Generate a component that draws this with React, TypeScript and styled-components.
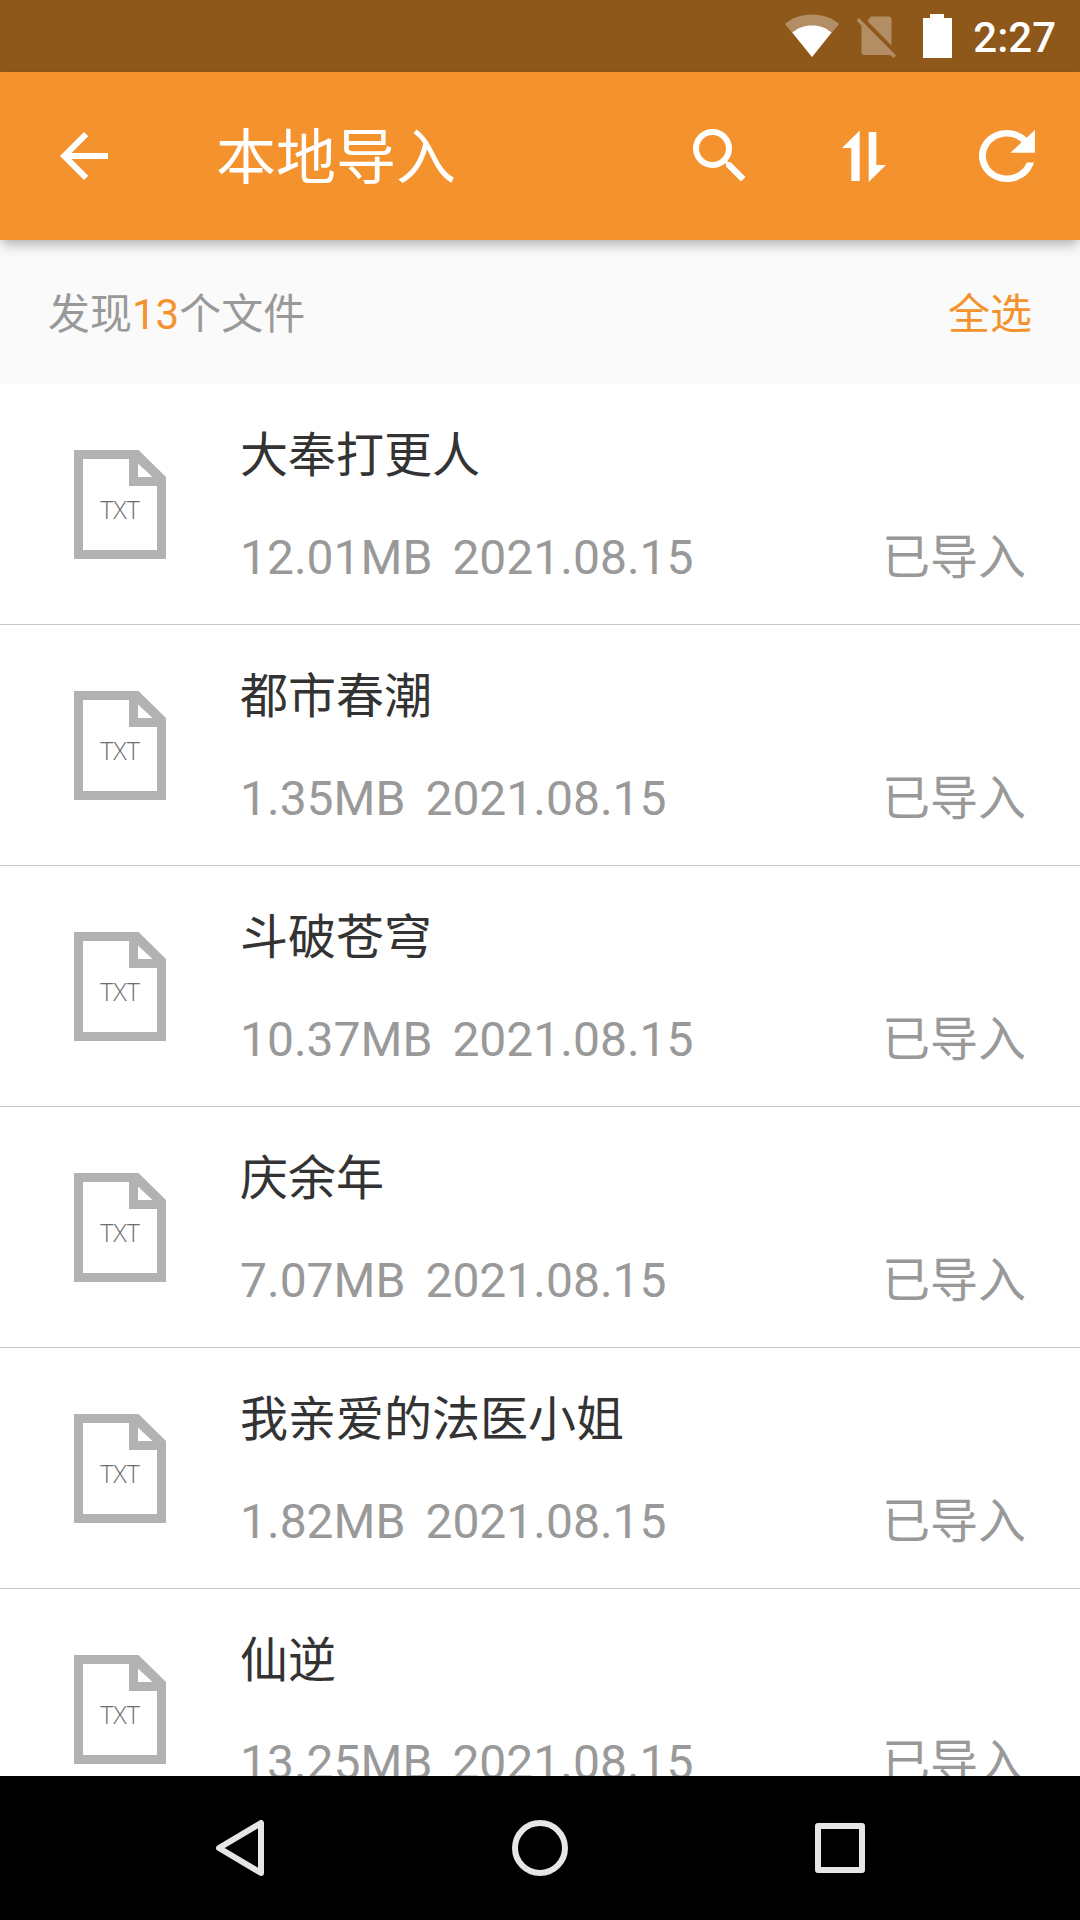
import React from "react";
import styled, { createGlobalStyle } from "styled-components";

const colors = {
  accent: "#f4932d",
  statusBar: "#8f581b",
  muted: "#999999",
  text: "#333333",
  divider: "#c8c8c8",
  summary: "#fafafa",
  navIcon: "#e6e6e6",
};

const GlobalStyle = createGlobalStyle`
  *, *::before, *::after { box-sizing: border-box; }
  body {
    margin: 0;
    background: #ffffff;
    font-family: Roboto, "Noto Sans CJK SC", sans-serif;
  }
  button {
    padding: 0;
    border: 0;
    background: none;
    font: inherit;
    color: inherit;
    cursor: pointer;
  }
  svg { display: block; flex: none; }
`;

const Screen = styled.div`
  display: flex;
  flex-direction: column;
  height: 100vh;
  overflow: hidden;
`;

const StatusBar = styled.div`
  display: flex;
  flex: none;
  align-items: center;
  justify-content: flex-end;
  gap: 10px;
  height: 72px;
  padding-right: 24px;
  background: ${colors.statusBar};
  color: #ffffff;
`;

const Clock = styled.time`
  padding-top: 4px;
  font-size: 42px;
  font-weight: 500;
  line-height: 48px;
`;

const AppBar = styled.header`
  display: flex;
  flex: none;
  align-items: center;
  height: 168px;
  background: ${colors.accent};
  color: #ffffff;
  box-shadow: 0 6px 12px -2px rgba(0, 0, 0, 0.32);
  z-index: 1;
`;

const IconButton = styled.button<{ $width: number }>`
  display: flex;
  flex: none;
  align-items: center;
  justify-content: center;
  width: ${(p) => p.$width}px;
  height: 144px;
`;

const Title = styled.h1`
  flex: 1;
  margin: 0;
  padding: 6px 0 0 48px;
  font-size: 60px;
  font-weight: 400;
  line-height: 72px;
`;

const Summary = styled.section`
  display: flex;
  flex: none;
  align-items: center;
  justify-content: space-between;
  height: 144px;
  padding: 6px 48px 0;
  background: ${colors.summary};
  color: ${colors.muted};
  font-size: 42px;
  line-height: 48px;
`;

const SummaryText = styled.p`
  margin: 0;
`;

const Count = styled.span`
  color: ${colors.accent};
`;

const SelectAll = styled.button`
  color: ${colors.accent};
`;

const FileList = styled.ul`
  flex: 1;
  min-height: 0;
  margin: 0;
  padding: 0;
  overflow-y: auto;
  scrollbar-width: none;
  list-style: none;
`;

const FileRow = styled.li`
  display: flex;
  align-items: center;
  gap: 74px;
  padding: 0 54px 0 74px;
  border-bottom: 1px solid ${colors.divider};
`;

const FileBody = styled.div`
  display: flex;
  flex: 1;
  flex-direction: column;
  gap: 46px;
  padding: 44px 0 38px;
  font-size: 48px;
  line-height: 56px;
`;

const FileName = styled.h2`
  margin: 0;
  color: ${colors.text};
  font-size: inherit;
  font-weight: 400;
`;

const FileMeta = styled.div`
  display: flex;
  gap: 20px;
  color: ${colors.muted};
`;

const FileState = styled.span`
  margin-left: auto;
`;

const IconLabel = styled.text`
  fill: #6e6e6e;
  font-family: "Open Sans", Roboto, sans-serif;
  font-size: 25px;
  font-weight: 300;
  text-anchor: middle;
`;

const NavBar = styled.nav`
  display: grid;
  flex: none;
  grid-template-columns: repeat(3, 1fr);
  height: 144px;
  padding: 0 calc(100% / 12);
  background: #000000;
`;

const NavButton = styled.button`
  display: flex;
  align-items: center;
  justify-content: center;
`;

const WifiIcon = () => (
  <svg width="54" height="44" viewBox="0 0 54 44" fill="#fff" aria-hidden="true">
    <path d="M27 43L0 10C7 4 16 .5 27 .5S47 4 54 10Z" opacity=".32" />
    <path d="M27 43L7.300 18.500C13 14 19 11.500 27 11.500S41 14 46.500 18.500Z" />
  </svg>
);

const NoSimIcon = () => (
  <svg width="54" height="44" viewBox="0 0 54 44" fill="#fff" opacity=".32" aria-hidden="true">
    <path d="M22 2.500H39.500Q42.500 2.500 42.500 5.500V31.500L18.500 7Z" />
    <path d="M10 4L7.500 6.500L12.500 11.500V38Q12.500 41 15.500 41H41L44.500 44L47 41.500Z" />
  </svg>
);

const BatteryIcon = () => (
  <svg width="50" height="44" viewBox="0 0 50 44" fill="#fff" aria-hidden="true">
    <path d="M17 0H31V4H39V44H10V4H17Z" />
  </svg>
);

const BackIcon = () => (
  <svg width="72" height="72" viewBox="0 0 24 24" fill="currentColor" aria-hidden="true">
    <path d="M20 11H7.830l5.590-5.590L12 4l-8 8 8 8 1.410-1.410L7.830 13H20v-2z" />
  </svg>
);

const SearchIcon = () => (
  <svg width="72" height="72" viewBox="0 0 24 24" fill="currentColor" aria-hidden="true">
    <path d="M15.500 14h-.79l-.28-.27A6.471 6.471 0 0 0 16 9.500 6.500 6.500 0 1 0 9.500 16c1.610 0 3.090-.59 4.230-1.570l.27.28v.79l5 4.990L20.490 19l-4.990-5zm-6 0C7.010 14 5 11.990 5 9.500S7.010 5 9.500 5 14 7.010 14 9.500 11.990 14 9.500 14z" />
  </svg>
);

const SortIcon = () => (
  <svg width="72" height="72" viewBox="0 0 72 72" fill="currentColor" aria-hidden="true">
    <path d="M31.700 10.500V61H23.300V28H14Z" />
    <path d="M40.700 12H48.300V45H58L40.700 62Z" />
  </svg>
);

const RefreshIcon = () => (
  <svg width="58" height="52" viewBox="4 4 16.600 16" preserveAspectRatio="none" fill="currentColor" aria-hidden="true">
    <path d="M17.650 6.350C16.200 4.900 14.210 4 12 4c-4.420 0-7.990 3.580-7.990 8s3.570 8 7.990 8c3.730 0 6.840-2.550 7.730-6h-2.080c-.82 2.330-3.040 4-5.650 4-3.310 0-6-2.690-6-6s2.690-6 6-6c1.660 0 3.140.69 4.220 1.780L13 11h7V4l-2.350 2.350z" />
  </svg>
);

const TxtIcon = () => (
  <svg width="92" height="109" viewBox="0 0 92 109" aria-hidden="true">
    <path
      fill="#b2b2b2"
      fillRule="evenodd"
      d="M0 0H64.500L92 27V109H0ZM9 9V100H83V36H55V9ZM64 13.500V27H78.500Z"
    />
    <IconLabel x="46" y="69">TXT</IconLabel>
  </svg>
);

const NavBackIcon = () => (
  <svg width="72" height="72" viewBox="0 0 72 72" fill="none" stroke={colors.navIcon} strokeWidth="6" strokeLinejoin="round" aria-hidden="true">
    <path d="M15 36L57 11V61Z" />
  </svg>
);

const NavHomeIcon = () => (
  <svg width="72" height="72" viewBox="0 0 72 72" fill="none" stroke={colors.navIcon} strokeWidth="6" aria-hidden="true">
    <circle cx="36" cy="36" r="25" />
  </svg>
);

const NavRecentsIcon = () => (
  <svg width="72" height="72" viewBox="0 0 72 72" fill="none" stroke={colors.navIcon} strokeWidth="6" strokeLinejoin="round" aria-hidden="true">
    <path d="M14 14H58V58H14Z" />
  </svg>
);

const files = [
  { name: "大奉打更人", size: "12.01MB", date: "2021.08.15" },
  { name: "都市春潮", size: "1.35MB", date: "2021.08.15" },
  { name: "斗破苍穹", size: "10.37MB", date: "2021.08.15" },
  { name: "庆余年", size: "7.07MB", date: "2021.08.15" },
  { name: "我亲爱的法医小姐", size: "1.82MB", date: "2021.08.15" },
  { name: "仙逆", size: "13.25MB", date: "2021.08.15" },
];

export default function App() {
  return (
    <Screen lang="zh-CN">
      <GlobalStyle />
      <StatusBar>
        <WifiIcon />
        <NoSimIcon />
        <BatteryIcon />
        <Clock>2:27</Clock>
      </StatusBar>
      <AppBar>
        <IconButton $width={168} aria-label="返回">
          <BackIcon />
        </IconButton>
        <Title>本地导入</Title>
        <IconButton $width={144} aria-label="搜索">
          <SearchIcon />
        </IconButton>
        <IconButton $width={144} aria-label="排序">
          <SortIcon />
        </IconButton>
        <IconButton $width={144} aria-label="刷新">
          <RefreshIcon />
        </IconButton>
      </AppBar>
      <Summary>
        <SummaryText>
          发现<Count>13</Count>个文件
        </SummaryText>
        <SelectAll>全选</SelectAll>
      </Summary>
      <FileList>
        {files.map((file) => (
          <FileRow key={file.name}>
            <TxtIcon />
            <FileBody>
              <FileName>{file.name}</FileName>
              <FileMeta>
                <span>{file.size}</span>
                <span>{file.date}</span>
                <FileState>已导入</FileState>
              </FileMeta>
            </FileBody>
          </FileRow>
        ))}
      </FileList>
      <NavBar>
        <NavButton aria-label="后退">
          <NavBackIcon />
        </NavButton>
        <NavButton aria-label="主屏幕">
          <NavHomeIcon />
        </NavButton>
        <NavButton aria-label="最近任务">
          <NavRecentsIcon />
        </NavButton>
      </NavBar>
    </Screen>
  );
}
